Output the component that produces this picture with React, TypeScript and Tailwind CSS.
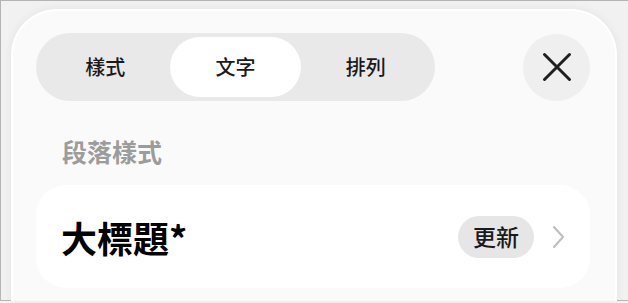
const FONT = { fontFamily: '"Noto Sans CJK TC", "Noto Sans", sans-serif' };

const TABS = ['樣式', '文字', '排列'];

export default function App() {
  return (
    <div className="h-[303px] w-[628px] overflow-hidden bg-[#f4f4f4]" style={FONT}>
      <div className="h-[301px] border-b border-l border-t border-[#b4b4b4] bg-[#f1f1f1] pl-[10px] pr-[11px] pt-[8px]">
        <div className="h-[292px] rounded-t-[46px] border-2 border-b-0 border-white bg-[#fafafa] pl-[23px] pt-[22px] shadow-[0_0_10px_rgba(0,0,0,0.06)]">
          <div className="flex w-[554px] items-center justify-between">
            <div className="grid h-[68px] w-[399px] grid-cols-3 rounded-full bg-[#e9e9e9] px-[4px] py-[4px]">
              {TABS.map((t) => (
                <div
                  key={t}
                  className={
                    t === '文字'
                      ? 'flex items-center justify-center rounded-full bg-white text-[20px] font-medium text-[#1a1a1a]'
                      : 'flex items-center justify-center text-[20px] font-medium text-[#1a1a1a]'
                  }
                >
                  {t}
                </div>
              ))}
            </div>
            <button className="flex h-[67px] w-[67px] items-center justify-center rounded-full bg-[#efefef]">
              <svg width="30" height="30" viewBox="0 0 30 30" fill="none">
                <path
                  d="M2.5 2.5 L27.5 27.5 M27.5 2.5 L2.5 27.5"
                  stroke="#1f1f1f"
                  strokeWidth="3"
                  strokeLinecap="round"
                />
              </svg>
            </button>
          </div>

          <div className="mt-[38px] pl-[26px] text-[25px] font-semibold leading-none text-[#9c9c9c]">
            段落樣式
          </div>

          <div className="mt-[21px] flex h-[103px] w-[554px] items-center justify-between rounded-[30px] bg-white pl-[25px] pr-[26px]">
            <span className="text-[36px] font-bold leading-none text-black">大標題*</span>
            <div className="flex items-center gap-[19px]">
              <span className="flex h-[42px] w-[76px] items-center justify-center rounded-full bg-[#e6e6e6] text-[23px] font-medium text-[#1a1a1a]">
                更新
              </span>
              <svg width="11" height="22" viewBox="0 0 11 22" fill="none">
                <path
                  d="M1 1 L10 11 L1 21"
                  stroke="#bdbdbd"
                  strokeWidth="2"
                  strokeLinecap="round"
                  strokeLinejoin="round"
                />
              </svg>
            </div>
          </div>
        </div>
      </div>
    </div>
  );
}
